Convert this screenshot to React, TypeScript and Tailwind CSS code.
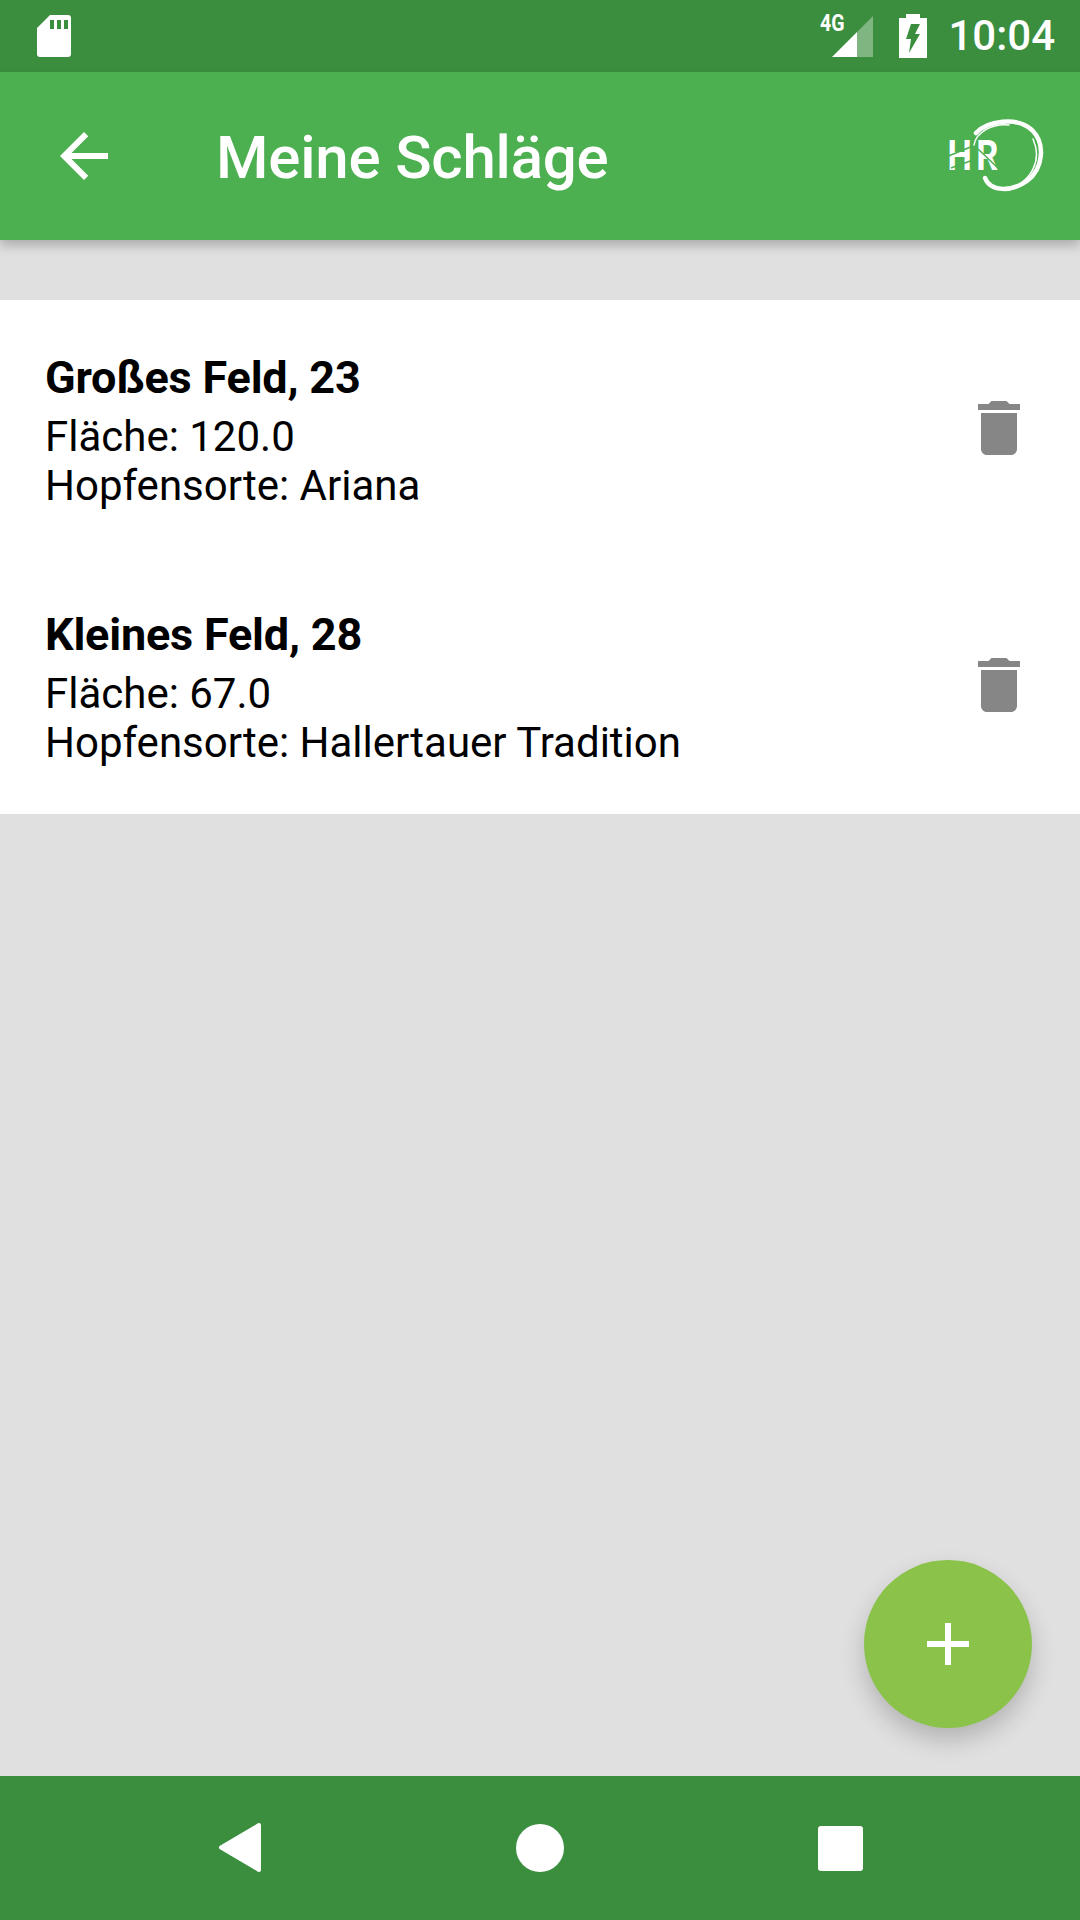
export default function App() {
  const fields = [
    { title: "Großes Feld, 23", area: "Fläche: 120.0", hops: "Hopfensorte: Ariana" },
    { title: "Kleines Feld, 28", area: "Fläche: 67.0", hops: "Hopfensorte: Hallertauer Tradition" },
  ];

  return (
    <div className="relative flex h-[1920px] w-[1080px] flex-col overflow-hidden bg-[#e0e0e0] font-['Roboto',sans-serif]">
      {/* STATUS BAR */}
      <div className="flex h-[72px] items-center bg-[#3a8e3e] pl-[37px] pr-[25px] text-white">
        <svg width="34" height="43" viewBox="0 0 34 43">
          <path
            fillRule="evenodd"
            fill="#fff"
            d="M13 0H31a3 3 0 0 1 3 3V39a3 3 0 0 1-3 3H3a3 3 0 0 1-3-3V13ZM13 5v9h4V5ZM20 5v9h4V5ZM27 5v9h4V5Z"
          />
        </svg>
        <div className="ml-auto flex items-center">
          <div className="relative h-[44px] w-[54px]">
            <span className="absolute left-0 top-[-3px] origin-left scale-x-[0.85] text-[23px] font-bold leading-[26px]">
              4G
            </span>
            <svg className="absolute left-[11px] top-[1px]" width="43" height="43" viewBox="0 0 43 43">
              <path d="M26 17 42 1V42H26Z" fill="#fff" fillOpacity="0.35" />
              <path d="M1 42 26 17V42Z" fill="#fff" />
            </svg>
          </div>
          <svg className="ml-[25px]" width="28" height="44" viewBox="0 0 28 44">
            <path
              fillRule="evenodd"
              fill="#fff"
              d="M7 0H21V4H28V44H0V4H7ZM12 10H21L16 20H21L10 39 12 25H7Z"
            />
          </svg>
          <span className="ml-[21px] text-[42px] font-medium leading-none">10:04</span>
        </div>
      </div>

      {/* APP BAR */}
      <div className="z-10 flex h-[168px] items-center bg-[#4caf50] pl-[48px] pr-[35px] shadow-[0_6px_10px_rgba(0,0,0,0.22)]">
        <svg width="72" height="72" viewBox="0 0 24 24" fill="#fff">
          <path d="M20 11H7.83l5.59-5.59L12 4l-8 8 8 8 1.41-1.41L7.83 13H20v-2z" />
        </svg>
        <h1 className="ml-[96px] mt-[3px] text-[60px] font-medium leading-none tracking-[-0.2px] text-white">
          Meine Schläge
        </h1>
        <svg className="ml-auto mt-[2px]" width="100" height="76" viewBox="0 0 100 76" fill="none">
          <text
            x="3 38"
            y="51"
            transform="scale(0.82 1)"
            fill="#fff"
            fontFamily="Roboto, sans-serif"
            fontSize="42"
            fontWeight="700"
          >
            HR
          </text>
          <path d="M1 38 28 27M6 49 28 41M33 30 54 50" stroke="#4caf50" strokeWidth="1.5" />
          <path
            d="M31 14C42 2 72-3 87 11C101 25 98 50 82 62C68 72 46 74 40 59"
            stroke="#fff"
            strokeWidth="4.5"
            strokeLinecap="round"
          />
          <path d="M29 26C31 13 48 4 64 6" stroke="#fff" strokeWidth="1.5" strokeLinecap="round" />
          <path d="M88 20C97 40 88 64 60 71" stroke="#fff" strokeWidth="1.5" strokeLinecap="round" />
        </svg>
      </div>

      {/* LIST */}
      <div className="mt-[60px] bg-white">
        {fields.map((field) => (
          <div key={field.title} className="flex h-[257px] items-start justify-between px-[45px] pt-[49px]">
            <div className="text-[42px] leading-[49px] text-black">
              <div className="mb-[6px] text-[45px] font-bold leading-[57px] tracking-[-0.2px]">{field.title}</div>
              <div>{field.area}</div>
              <div>{field.hops}</div>
            </div>
            <svg width="72" height="72" viewBox="0 0 24 24" fill="#868686" className="mt-[43px]">
              <path d="M6 19c0 1.1.9 2 2 2h8c1.1 0 2-.9 2-2V7H6v12zM19 4h-3.5l-1-1h-5l-1 1H5v2h14V4z" />
            </svg>
          </div>
        ))}
      </div>

      {/* FAB */}
      <button className="absolute left-[864px] top-[1560px] flex h-[168px] w-[168px] items-center justify-center rounded-full bg-[#8bc34a] shadow-[0_12px_24px_rgba(0,0,0,0.2)]">
        <svg width="72" height="72" viewBox="0 0 24 24" fill="#fff">
          <path d="M19 13h-6v6h-2v-6H5v-2h6V5h2v6h6v2z" />
        </svg>
      </button>

      {/* NAV BAR */}
      <div className="mt-auto grid h-[144px] grid-cols-[300px_300px_300px] items-center justify-center bg-[#3a8e3e]">
        <svg className="justify-self-center" width="72" height="72" viewBox="0 0 72 72">
          <path d="M17 35.5 55 13V58Z" fill="#fff" stroke="#fff" strokeWidth="4" strokeLinejoin="round" />
        </svg>
        <div className="h-[48px] w-[48px] justify-self-center rounded-full bg-white" />
        <div className="h-[45px] w-[45px] justify-self-center rounded-[3px] bg-white" />
      </div>
    </div>
  );
}
